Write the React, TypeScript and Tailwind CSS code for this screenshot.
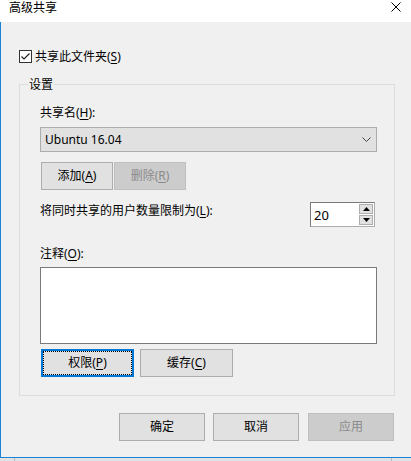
import type { ReactNode } from 'react'

const font = { fontFamily: '"Noto Sans", "Noto Sans CJK SC", sans-serif' }

function Key({ children }: { children: ReactNode }) {
  return <u className="underline underline-offset-[2px] decoration-[1px]">{children}</u>
}

// fixed-height text row so mixed Latin/CJK fonts don't grow the line box
function Line({ children, className = '' }: { children: ReactNode; className?: string }) {
  return <div className={`h-[16px] flex items-center whitespace-nowrap ${className}`}>{children}</div>
}

function Button({
  children,
  width,
  disabled,
  focused,
}: {
  children: ReactNode
  width: string
  disabled?: boolean
  focused?: boolean
}) {
  if (disabled) {
    return (
      <div
        className={`${width} h-[28px] flex items-center justify-center border border-[#bfbfbf] bg-[#cccccc] text-[#8a8a8a]`}
      >
        {children}
      </div>
    )
  }
  if (focused) {
    return (
      <div className={`${width} h-[28px] border-2 border-[#0078d7] bg-[#e1e1e1]`}>
        <div className="h-full flex items-center justify-center border border-dotted border-black">
          {children}
        </div>
      </div>
    )
  }
  return (
    <div
      className={`${width} h-[28px] flex items-center justify-center border border-[#adadad] bg-[#e1e1e1]`}
    >
      {children}
    </div>
  )
}

export default function App() {
  return (
    <div className="w-[411px] h-[461px] bg-[#f0f0f0] text-[12px] leading-[16px] text-black flex flex-col" style={font}>
      {/* title bar */}
      <div className="h-[22px] shrink-0 bg-white flex items-start justify-between pl-[9px] pr-[10px]">
        <Line>高级共享</Line>
        <svg width="10" height="10" viewBox="0 0 10 10" className="mt-[2px]">
          <path d="M0.5 0.5L9.5 9.5M9.5 0.5L0.5 9.5" stroke="#000" strokeWidth="1" />
        </svg>
      </div>

      {/* body */}
      <div className="h-[436px] shrink-0 border-l border-b border-[#1883d7] flex flex-col">
        <label className="h-[13px] flex items-center ml-[18px] mt-[28px]">
          <span className="w-[13px] h-[13px] border border-[#333333] bg-white flex items-center justify-center">
            <svg width="11" height="11" viewBox="0 0 11 11">
              <path d="M1.5 5.5L4 8L9.5 2.5" fill="none" stroke="#222" strokeWidth="1.2" />
            </svg>
          </span>
          <Line className="ml-[3px]">
            共享此文件夹(<Key>S</Key>)
          </Line>
        </label>

        {/* group box */}
        <div className="relative ml-[18px] mr-[16px] mt-[21px] h-[312px] border border-[#dcdcdc] pl-[20px] pr-[17px]">
          <Line className="absolute -top-[8px] left-[8px] px-[1px] bg-[#f0f0f0]">设置</Line>

          <Line className="mt-[20px]">
            共享名(<Key>H</Key>):
          </Line>
          <div className="mt-[6px] h-[25px] border border-[#adadad] bg-[#e1e1e1] flex items-center justify-between pl-[4px] pr-[5px]">
            <Line>Ubuntu 16.04</Line>
            <svg width="9" height="5" viewBox="0 0 9 5">
              <path d="M0.5 0.5L4.5 4.5L8.5 0.5" fill="none" stroke="#444" strokeWidth="1" />
            </svg>
          </div>

          <div className="mt-[10px] flex gap-[1px] ml-[1px]">
            <Button width="w-[72px]">
              <Line>
                添加(<Key>A</Key>)
              </Line>
            </Button>
            <Button width="w-[72px]" disabled>
              <Line>
                删除(<Key>R</Key>)
              </Line>
            </Button>
          </div>

          <div className="mt-[12px] flex items-start justify-between">
            <Line className="mt-[1px]">
              将同时共享的用户数量限制为(<Key>L</Key>):
            </Line>
            <div className="mr-[2px] w-[65px] h-[25px] flex border border-[#7a7a7a] border-r-[#adadad] border-b-[#adadad] bg-white">
              <span className="flex-1 flex items-center pl-[3px] text-[13px]">20</span>
              <div className="w-[16px] flex flex-col gap-[1px] p-[1px] bg-white">
                <div className="flex-1 border border-[#adadad] bg-[#e1e1e1] flex items-center justify-center">
                  <svg width="7" height="4" viewBox="0 0 7 4">
                    <path d="M3.5 0L7 4H0Z" fill="#000" />
                  </svg>
                </div>
                <div className="flex-1 border border-[#adadad] bg-[#e1e1e1] flex items-center justify-center">
                  <svg width="7" height="4" viewBox="0 0 7 4">
                    <path d="M0 0H7L3.5 4Z" fill="#000" />
                  </svg>
                </div>
              </div>
            </div>
          </div>

          <Line className="mt-[19px]">
            注释(<Key>O</Key>):
          </Line>
          <div className="mt-[5px] h-[77px] border border-[#7a7a7a] bg-white" />

          <div className="mt-[5px] flex gap-[6px] ml-[1px]">
            <Button width="w-[93px]" focused>
              <Line>
                权限(<Key>P</Key>)
              </Line>
            </Button>
            <Button width="w-[93px]">
              <Line>
                缓存(<Key>C</Key>)
              </Line>
            </Button>
          </div>
        </div>

        <div className="mt-[17px] flex justify-end pr-[17px]">
          <div className="mr-[8px]">
            <Button width="w-[86px]">
              <Line>确定</Line>
            </Button>
          </div>
          <div className="mr-[9px]">
            <Button width="w-[86px]">
              <Line>取消</Line>
            </Button>
          </div>
          <Button width="w-[86px]" disabled>
            <Line>应用</Line>
          </Button>
        </div>
      </div>

      {/* window behind */}
      <div className="flex-1 bg-[#e2e2e2] flex">
        <div className="w-[15px] border-r border-[#bdbdbd]" />
        <div className="flex-1 border-r border-[#bdbdbd]" />
        <div className="w-[19px]" />
      </div>
    </div>
  )
}
